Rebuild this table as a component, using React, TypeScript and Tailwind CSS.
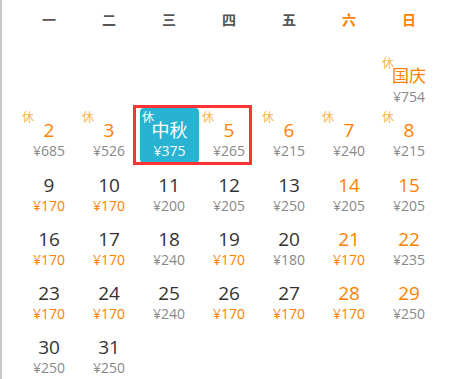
const WEEK = ["一", "二", "三", "四", "五", "六", "日"];

type Day = {
  label: string;
  price: number;
  rest?: boolean;
  festival?: boolean;
  selected?: boolean;
};

const LOW = 170;

const days: (Day | null)[] = [
  null, null, null, null, null, null,
  { label: "国庆", price: 754, rest: true, festival: true },
  { label: "2", price: 685, rest: true },
  { label: "3", price: 526, rest: true },
  { label: "中秋", price: 375, rest: true, festival: true, selected: true },
  { label: "5", price: 265, rest: true },
  { label: "6", price: 215, rest: true },
  { label: "7", price: 240, rest: true },
  { label: "8", price: 215, rest: true },
  { label: "9", price: 170 },
  { label: "10", price: 170 },
  { label: "11", price: 200 },
  { label: "12", price: 205 },
  { label: "13", price: 250 },
  { label: "14", price: 205 },
  { label: "15", price: 205 },
  { label: "16", price: 170 },
  { label: "17", price: 170 },
  { label: "18", price: 240 },
  { label: "19", price: 170 },
  { label: "20", price: 180 },
  { label: "21", price: 170 },
  { label: "22", price: 235 },
  { label: "23", price: 170 },
  { label: "24", price: 170 },
  { label: "25", price: 240 },
  { label: "26", price: 170 },
  { label: "27", price: 170 },
  { label: "28", price: 170 },
  { label: "29", price: 250 },
  { label: "30", price: 250 },
  { label: "31", price: 250 },
];

function DayCell({ day, col }: { day: Day | null; col: number }) {
  if (!day) return <div className="h-[54px]" />;

  const weekend = col >= 5;
  const orangeNum = day.rest || weekend;

  if (day.selected) {
    return (
      <div className="relative ml-px flex h-[55px] flex-col items-center rounded-[4px] bg-[#29b3d3] pt-[10px] text-white">
        <span className="absolute left-[2px] top-[3px] text-[12px] leading-[14px]">休</span>
        <span className="text-[18px] leading-[24px]">{day.label}</span>
        <span className="text-[14px] leading-[18px]">¥{day.price}</span>
      </div>
    );
  }

  return (
    <div className="relative flex h-[54px] flex-col items-center pt-[10px]">
      {day.rest && (
        <span className="absolute left-[3px] top-[3px] text-[12px] leading-[14px] text-[#f9b548]">休</span>
      )}
      <span
        className={[
          day.festival ? "text-[17px]" : "text-[19px]",
          "leading-[24px]",
          orangeNum ? "text-[#ff7f00]" : "text-[#333]",
        ].join(" ")}
      >
        {day.label}
      </span>
      <span
        className={[
          "text-[14px] leading-[18px]",
          day.price <= LOW ? "text-[#ff7f00]" : "text-[#888]",
        ].join(" ")}
      >
        ¥{day.price}
      </span>
    </div>
  );
}

export default function App() {
  return (
    <div
      className="relative h-[379px] w-[464px] overflow-hidden border-l-2 border-[#c8c8c8] bg-white"
      style={{ fontFamily: '"Open Sans", "Noto Sans CJK SC", sans-serif' }}
    >
      <div className="pl-[17px]">
        <div className="grid h-[54px] w-[420px] grid-cols-7 pt-[10px]">
          {WEEK.map((w, i) => (
            <div
              key={w}
              className={[
                "text-center text-[14px] font-bold leading-[20px]",
                i >= 5 ? "text-[#ff7f00]" : "text-[#555]",
              ].join(" ")}
            >
              {w}
            </div>
          ))}
        </div>
        <div className="grid w-[420px] grid-cols-7">
          {days.map((d, i) => (
            <DayCell key={i} day={d} col={i % 7} />
          ))}
        </div>
      </div>
      {/* selection frame */}
      <div className="pointer-events-none absolute left-[131px] top-[105px] h-[60px] w-[119px] border-[3px] border-[#f33]" />
    </div>
  );
}
